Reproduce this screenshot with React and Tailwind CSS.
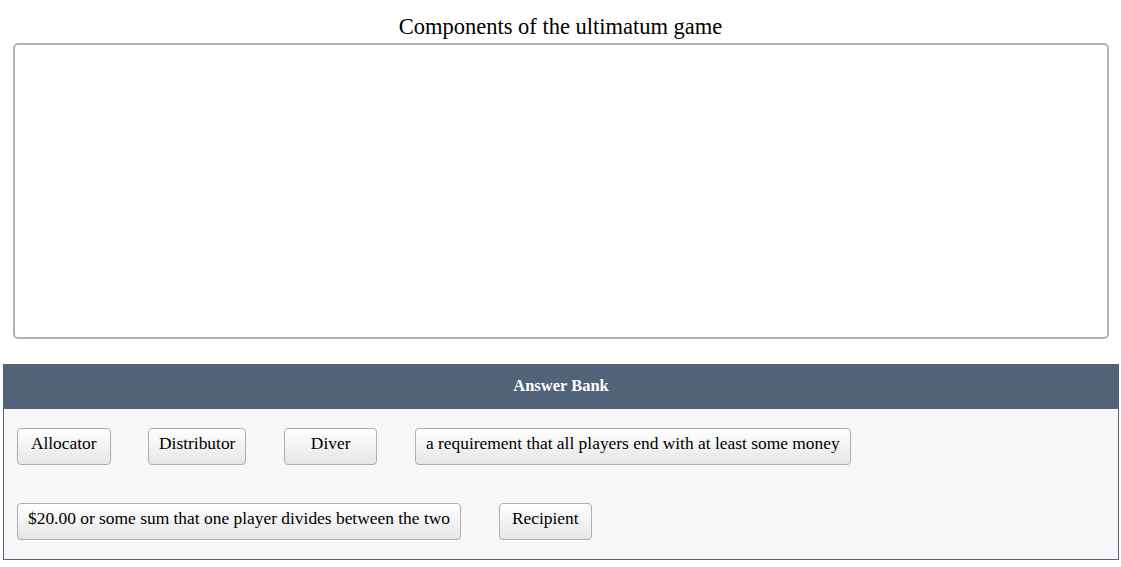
import React from 'react';

const answers = [
  'Allocator',
  'Distributor',
  'Diver',
  'a requirement that all players end with at least some money',
  '$20.00 or some sum that one player divides between the two',
  'Recipient',
];

const App = () => {
  return (
    <div className="bg-white w-[1121px] h-[567px] overflow-hidden font-['Liberation_Serif',serif] text-black">
      <div className="h-[43px] flex items-end justify-center pb-[5px]">
        <h1 className="text-[22.5px] leading-none">Components of the ultimatum game</h1>
      </div>

      {/* Drop zone */}
      <div className="mx-[13px] w-[1096px] h-[296px] border-2 border-[#b3b3b3] rounded-[5px] bg-white"></div>

      {/* Answer bank */}
      <div className="mt-[25px] mx-[3px] w-[1116px] border border-[#506379]">
        <div className="h-[44px] bg-[#506379] flex items-center justify-center pb-[2px]">
          <span className="text-white font-bold text-[16.5px]">Answer Bank</span>
        </div>
        <div className="bg-[#f7f7f7] flex flex-wrap gap-x-[37.5px] gap-y-[38px] pl-[13px] pr-[13px] pt-[19px] pb-[19px]">
          {answers.map((a) => (
            <button
              key={a}
              className="h-[37px] min-w-[93.5px] px-[10px] border border-[#adadad] rounded-[4px] bg-gradient-to-b from-white to-[#e6e6e6] text-[17.42px] text-black leading-none pb-[5px]"
            >
              {a}
            </button>
          ))}
        </div>
      </div>
    </div>
  );
};

export default App;
